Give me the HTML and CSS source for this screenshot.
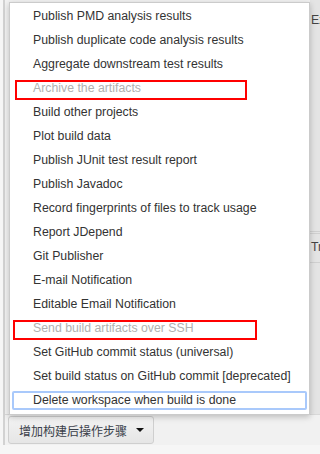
FILE: index.html
```html
<!DOCTYPE html>
<html lang="zh-CN">
<head>
    <meta charset="UTF-8">
    <meta name="viewport" content="width=device-width, initial-scale=1.0">
    <title>Post-build actions</title>
    <link rel="stylesheet" href="styles.css">
</head>
<body>
    <div class="section">
        <div class="panel">
            <div class="panel-main"></div>
            <div class="panel-side">
                <div class="side-label">Execute shell</div>
                <div class="side-field">Trigger</div>
            </div>
        </div>
        <button class="add-btn">增加构建后操作步骤<span class="caret"></span></button>

        <ul class="menu">
            <li>Publish PMD analysis results</li>
            <li>Publish duplicate code analysis results</li>
            <li>Aggregate downstream test results</li>
            <li class="disabled">Archive the artifacts<span class="mark mark-archive"></span></li>
            <li>Build other projects</li>
            <li>Plot build data</li>
            <li>Publish JUnit test result report</li>
            <li>Publish Javadoc</li>
            <li>Record fingerprints of files to track usage</li>
            <li>Report JDepend</li>
            <li>Git Publisher</li>
            <li>E-mail Notification</li>
            <li>Editable Email Notification</li>
            <li class="disabled">Send build artifacts over SSH<span class="mark mark-ssh"></span></li>
            <li>Set GitHub commit status (universal)</li>
            <li>Set build status on GitHub commit [deprecated]</li>
            <li class="focused">Delete workspace when build is done</li>
        </ul>
    </div>
</body>
</html>
```

FILE: styles.css
```css
* {
    box-sizing: border-box;
}
body {
    margin: 0;
    background: #f6f6f6;
    font-family: "Liberation Sans", Arial, sans-serif;
    font-size: 12.3px;
    color: #333;
    overflow: hidden;
}
.section {
    position: relative;
    margin-left: 3px;
    border-left: 2px solid #d2d2d2;
    padding-bottom: 1px;
    background: #f1f1f1;
}
.panel {
    display: flex;
    height: 415px;
    border-bottom: 1px solid #d8d8d8;
}
.panel-main {
    flex: 1;
}
.panel-side {
    width: 10px;
    background: #e4e4e4;
    overflow: hidden;
    white-space: nowrap;
    color: #444;
}
.side-label {
    padding-left: 1px;
    margin-top: 13px;
    line-height: 14px;
}
.side-field {
    margin-top: 204px;
    padding: 6px 0 8px 1px;
    border-top: 3px double #d0d0d0;
    border-bottom: 1px solid #d0d0d0;
    line-height: 14px;
}
.add-btn {
    display: flex;
    align-items: center;
    margin: 1px 0 0 3px;
    height: 28px;
    padding: 0 9px 0 10px;
    border: 1px solid #cfcfcf;
    border-radius: 3px;
    background: linear-gradient(#f3f3f3, #e6e6e6);
    font-family: "Liberation Sans", "Noto Sans CJK SC", sans-serif;
    font-size: 12px;
    color: #3a3f4a;
}
.caret {
    margin-left: 9px;
    border-left: 4px solid transparent;
    border-right: 4px solid transparent;
    border-top: 4px solid #111;
}
.menu {
    position: absolute;
    left: 4px;
    top: 2px;
    width: 301px;
    margin: 0;
    padding: 1px 0 2px;
    list-style: none;
    background: #fff;
    border: 1px solid #cbcbcb;
    box-shadow: 0 2px 6px rgba(0, 0, 0, 0.22);
}
.menu li {
    position: relative;
    height: 24px;
    line-height: 24px;
    padding-left: 23px;
    white-space: nowrap;
}
.menu li.disabled {
    color: #b0b0b0;
}
.mark {
    position: absolute;
    top: 4px;
    height: 20px;
    border: 2px solid #ff0000;
}
.mark-archive {
    left: 5px;
    width: 232px;
}
.mark-ssh {
    left: 3px;
    width: 244px;
}
.menu li.focused::after {
    content: "";
    position: absolute;
    left: 2px;
    right: 2px;
    top: 3px;
    bottom: 2px;
    border: 2px solid #a9c9fb;
    border-radius: 2px;
}
```
